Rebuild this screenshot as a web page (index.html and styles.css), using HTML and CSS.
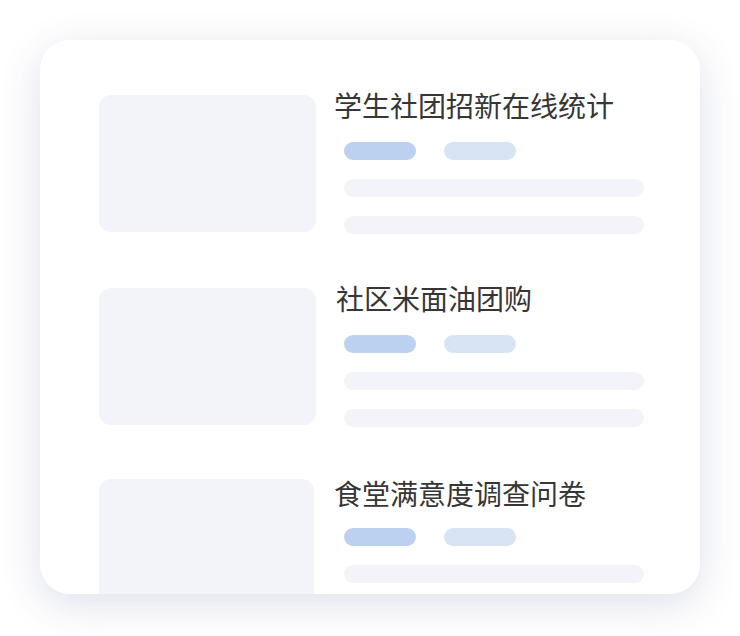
FILE: index.html
```html
<!DOCTYPE html>
<html lang="zh-CN">
<head>
<meta charset="utf-8">
<title>列表骨架</title>
<link rel="stylesheet" href="styles.css">
</head>
<body>
<div class="stage">
  <div class="card">
    <div class="row">
      <div class="thumb"></div>
      <div class="info">
        <div class="title">学生社团招新在线统计</div>
        <div class="tags"><span class="pill pill-a"></span><span class="pill pill-b"></span></div>
        <div class="line"></div>
        <div class="line"></div>
      </div>
    </div>
    <div class="row">
      <div class="thumb"></div>
      <div class="info">
        <div class="title title-inset">社区米面油团购</div>
        <div class="tags"><span class="pill pill-a"></span><span class="pill pill-b"></span></div>
        <div class="line"></div>
        <div class="line"></div>
      </div>
    </div>
    <div class="row row-last">
      <div class="thumb thumb-narrow"></div>
      <div class="info">
        <div class="title title-low">食堂满意度调查问卷</div>
        <div class="tags"><span class="pill pill-a"></span><span class="pill pill-b"></span></div>
        <div class="line"></div>
        <div class="line"></div>
      </div>
    </div>
  </div>
</div>
</body>
</html>
```
FILE: styles.css
```css
html, body {
  margin: 0;
  padding: 0;
  background: #ffffff;
}
body {
  font-family: "Noto Sans CJK SC", "Noto Sans", sans-serif;
}
.stage {
  padding: 40px;
  width: 660px;
}
.card {
  width: 660px;
  height: 554px;
  box-sizing: border-box;
  background: #ffffff;
  border-radius: 30px;
  box-shadow: 0 10px 40px rgba(50, 60, 130, 0.16);
  overflow: hidden;
  padding: 55px 56px 0 59px;
  display: flex;
  flex-direction: column;
  gap: 54px;
}
.row {
  display: flex;
  align-items: flex-start;
  flex-shrink: 0;
}
.thumb {
  width: 217px;
  height: 137px;
  flex-shrink: 0;
  background: #f3f4f9;
  border-radius: 12px;
}
.row-last .thumb {
  margin-top: -2px;
}
.thumb-narrow {
  width: 215px;
  margin-right: 2px;
}
.info {
  margin-left: 18px;
  flex: 1;
  display: flex;
  flex-direction: column;
}
.title {
  font-size: 28px;
  line-height: 20px;
  height: 20px;
  color: #363636;
  white-space: nowrap;
  margin-bottom: 27px;
}
.title-inset {
  padding-left: 2px;
}
.title-low {
  padding-top: 2px;
  margin-bottom: 25px;
}
.tags {
  display: flex;
  gap: 28px;
  margin-left: 10px;
  margin-bottom: 19px;
}
.pill {
  display: block;
  width: 72px;
  height: 18px;
  border-radius: 9px;
}
.pill-a {
  background: #bcd1f0;
}
.pill-b {
  background: #d8e3f4;
}
.line {
  margin-left: 10px;
  height: 18px;
  border-radius: 9px;
  background: #f3f4f9;
}
.line + .line {
  margin-top: 19px;
}
```
